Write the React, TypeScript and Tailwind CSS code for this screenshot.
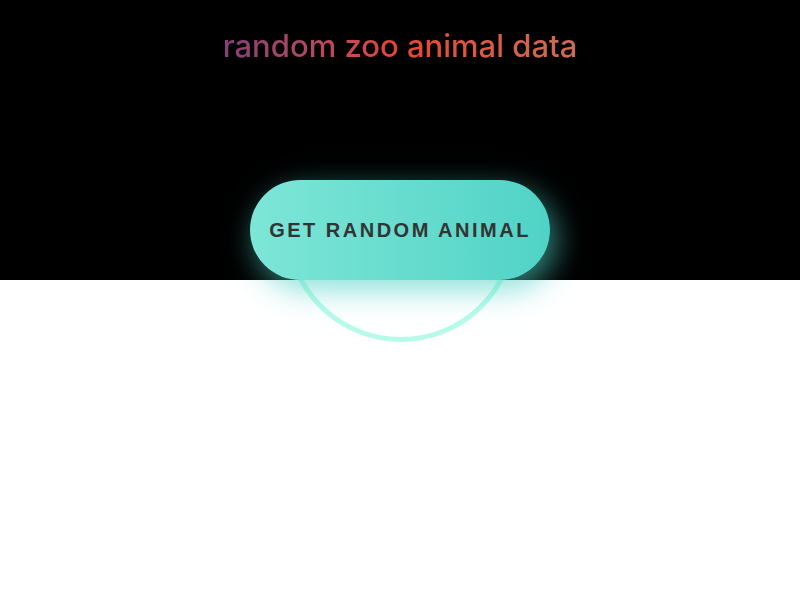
import React from "react";

export default function App() {
  return (
    <div className="relative w-[800px] h-[600px] bg-white overflow-hidden">
      <div className="absolute left-[285px] top-[110px] w-[232px] h-[232px] rounded-full border-[5px] border-[#b6fbea] z-0" />
      <div className="relative z-10 h-[280px] bg-black flex flex-col items-center">
        <h1
          className="mt-[26px] text-[31px] leading-[40px] font-medium bg-clip-text text-transparent bg-gradient-to-r from-[#853f7b] via-[#e8452d] to-[#cc6b56]"
          style={{ fontFamily: "Inter, 'Noto Sans', sans-serif" }}
        >
          random zoo animal data
        </h1>
        <button
          className="mt-auto w-[300px] h-[100px] rounded-full bg-gradient-to-r from-[#7de6d7] to-[#4fd3c6] text-[#333333] text-[20px] font-bold tracking-[2.5px] shadow-[6px_10px_30px_rgba(78,211,196,0.65)]"
          style={{ fontFamily: "'Liberation Sans', Arial, sans-serif" }}
        >
          GET RANDOM ANIMAL
        </button>
      </div>
    </div>
  );
}
